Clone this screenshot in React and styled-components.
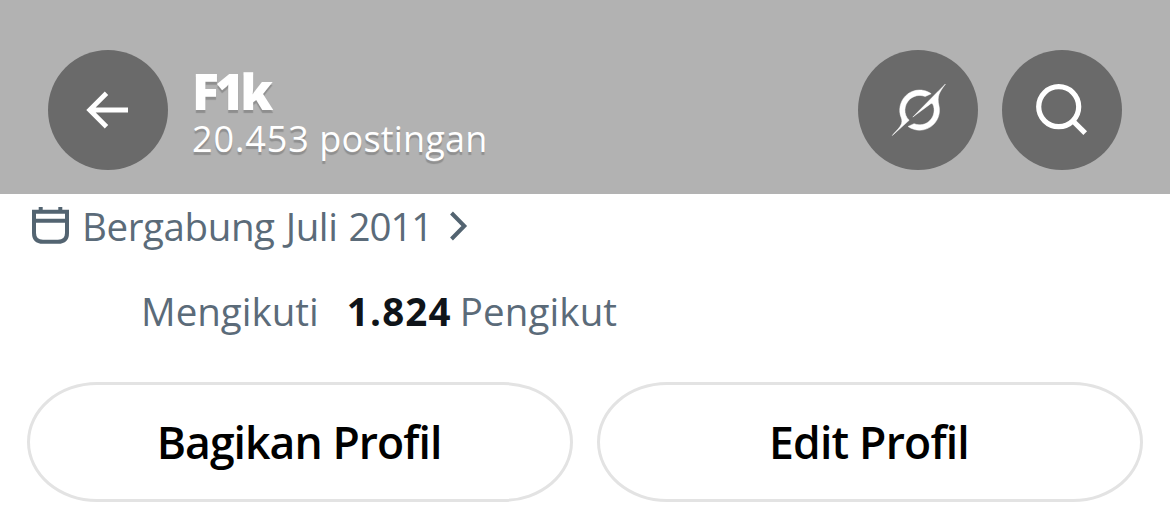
import React from 'react';
import styled, { createGlobalStyle } from 'styled-components';

const GlobalStyle = createGlobalStyle`
  * { box-sizing: border-box; }
  body {
    margin: 0;
    background: #fff;
    font-family: "Open Sans", "Noto Sans", sans-serif;
  }
`;

const Page = styled.div`
  width: 1170px;
  height: 525px;
  overflow: hidden;
  background: #fff;
`;

const Header = styled.header`
  display: flex;
  align-items: flex-start;
  height: 194px;
  padding: 50px 48px 0;
  background: #b2b2b2;
`;

const RoundButton = styled.button`
  display: flex;
  align-items: center;
  justify-content: center;
  flex: none;
  width: 120px;
  height: 120px;
  padding: 0;
  border: 0;
  border-radius: 50%;
  background: #6a6a6a;
  color: #fff;
`;

const Titles = styled.div`
  flex: 1;
  padding: 12px 0 0 24px;
  color: #fff;
  text-shadow: 0 3px 1px rgba(0, 0, 0, 0.2);
  white-space: nowrap;
`;

const Name = styled.h1`
  margin: 0;
  font-size: 50px;
  line-height: 59px;
  font-weight: 800;
  letter-spacing: -4px;
`;

const PostCount = styled.div`
  font-size: 36px;
  line-height: 36px;
  letter-spacing: 0.2px;
`;

const Figure = styled.span`
  letter-spacing: ${(p) => p.$tracking}px;
`;

const Actions = styled.div`
  display: flex;
  gap: 24px;
`;

const JoinedRow = styled.div`
  display: flex;
  align-items: center;
  height: 64px;
  padding-left: 30px;
  color: #536471;
`;

const Meta = styled.span`
  font-size: 38.5px;
  line-height: 54px;
  letter-spacing: ${(p) => p.$tracking || 0}px;
  word-spacing: ${(p) => p.$wordGap || 0}px;
  color: #5b6b79;
  white-space: nowrap;
`;

const JoinedText = styled(Meta)`
  margin: 0 17px 0 10px;
`;

const StatsRow = styled.div`
  display: flex;
  align-items: baseline;
  margin-top: 26px;
  height: 54px;
  padding-left: 141px;
`;

const Count = styled(Meta)`
  margin: 0 8px 0 28px;
  font-weight: 700;
  color: #0f1419;
`;

const Buttons = styled.div`
  display: grid;
  grid-template-columns: 1fr 1fr;
  gap: 24px;
  margin-top: 44px;
  padding: 0 27px;
`;

const PillButton = styled.button`
  height: 120px;
  padding: 0 2px 2px 0;
  border: 3px solid #e3e3e3;
  border-radius: 70px / 60px;
  background: #fff;
  color: #000;
  font-family: inherit;
  font-size: 44.5px;
  font-weight: 600;
  letter-spacing: ${(p) => p.$tracking || 0}px;
  white-space: nowrap;
`;

const Icon = styled.svg`
  display: block;
  flex: none;
  fill: none;
  stroke: currentColor;
`;

const ArrowIcon = () => (
  <Icon width="120" height="120" viewBox="0 0 120 120" strokeWidth="4.8">
    <path d="M80 60H42M58.5 43.2L41.7 60L58.5 76.8" />
  </Icon>
);

const SlashCircleIcon = () => (
  <Icon width="120" height="120" viewBox="0 0 120 120">
    <path
      transform="translate(34.3 34) scale(1.61)"
      fill="currentColor"
      strokeWidth="0.3"
      d="M12.745 20.54l10.97-8.19c.539-.4 1.307-.244 1.564.38 1.349 3.288.746 7.241-1.938 9.955-2.683 2.714-6.417 3.31-9.83 1.954l-3.728 1.745c5.347 3.697 11.84 2.782 15.898-1.324 3.219-3.255 4.216-7.692 3.284-11.693l.008.009c-1.351-5.878.332-8.227 3.782-13.031L33 0l-4.54 4.59v-.014L12.743 20.544m-2.263 1.987c-3.837-3.707-3.175-9.446.1-12.755 2.42-2.449 6.388-3.448 9.852-1.979l3.72-1.737c-.67-.49-1.53-1.017-2.515-1.387-4.455-1.854-9.789-.931-13.41 2.728-3.483 3.523-4.579 8.94-2.697 13.561 1.405 3.454-.899 5.898-3.22 8.364C1.49 30.2.666 31.074 0 32l10.478-9.466"
    />
  </Icon>
);

const SearchIcon = () => (
  <Icon width="120" height="120" viewBox="0 0 120 120" strokeWidth="5.2">
    <circle cx="56.7" cy="56.7" r="20" />
    <path d="M71 71L83.2 83.2" />
  </Icon>
);

const CalendarIcon = () => (
  <Icon width="42" height="42" viewBox="0 0 42 42" strokeWidth="4">
    <path d="M4 6.8H37V28Q37 36.8 28 36.8H13Q4 36.8 4 28ZM4 15.7H37M10.7 2V8M30.3 2V8" />
  </Icon>
);

const ChevronIcon = () => (
  <Icon width="20" height="32" viewBox="0 0 20 32" strokeWidth="4">
    <path d="M2.5 3L15.3 16L2.5 29" />
  </Icon>
);

export default function App() {
  return (
    <Page>
      <GlobalStyle />
      <Header>
        <RoundButton aria-label="Kembali"><ArrowIcon /></RoundButton>
        <Titles>
          <Name>F1k</Name>
          <PostCount><Figure $tracking={0.9}>20.453</Figure> postingan</PostCount>
        </Titles>
        <Actions>
          <RoundButton aria-label="Grok"><SlashCircleIcon /></RoundButton>
          <RoundButton aria-label="Cari"><SearchIcon /></RoundButton>
        </Actions>
      </Header>
      <JoinedRow>
        <CalendarIcon />
        <JoinedText $tracking={-0.4} $wordGap={1.5}>
          Bergabung Juli <Figure $tracking={-1.1}>2011</Figure>
        </JoinedText>
        <ChevronIcon />
      </JoinedRow>
      <StatsRow>
        <Meta>Mengikuti</Meta>
        <Count $tracking={1.2}>1.824</Count>
        <Meta $tracking={0.1}>Pengikut</Meta>
      </StatsRow>
      <Buttons>
        <PillButton $tracking={-0.95}>Bagikan Profil</PillButton>
        <PillButton $tracking={-0.8}>Edit Profil</PillButton>
      </Buttons>
    </Page>
  );
}
